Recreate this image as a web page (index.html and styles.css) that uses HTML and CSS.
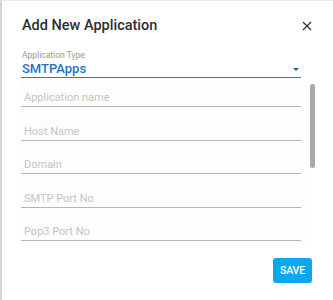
FILE: index.html
```html
<!DOCTYPE html>
<html lang="en">
<head>
    <meta charset="UTF-8">
    <meta name="viewport" content="width=device-width, initial-scale=1.0">
    <title>Add New Application</title>
    <link rel="stylesheet" href="styles.css">
</head>
<body>
    <div class="dialog">
        <div class="dialog-header">
            <h2 class="dialog-title">Add New Application</h2>
            <button type="button" class="close-btn" aria-label="Close">
                <svg width="10" height="10" viewBox="0 0 10 10">
                    <path d="M1 1 L9 9 M9 1 L1 9" stroke="#333" stroke-width="1.3" fill="none"/>
                </svg>
            </button>
        </div>

        <div class="select-field">
            <label class="select-label">Application Type</label>
            <div class="select-value">
                <span>SMTPApps</span>
                <span class="select-arrow"></span>
            </div>
        </div>

        <div class="scroll-area">
            <div class="field-list">
                <input type="text" class="form-input" placeholder="Application name">
                <input type="text" class="form-input" placeholder="Host Name">
                <input type="text" class="form-input" placeholder="Domain">
                <input type="text" class="form-input" placeholder="SMTP Port No">
                <input type="text" class="form-input" placeholder="Pop3 Port No">
                <input type="text" class="form-input" placeholder="User Name">
                <input type="password" class="form-input" placeholder="Password">
                <input type="text" class="form-input" placeholder="From Email">
                <input type="text" class="form-input" placeholder="Description">
            </div>
            <div class="scroll-track">
                <div class="scroll-thumb"></div>
            </div>
        </div>

        <div class="dialog-actions">
            <button type="button" class="save-btn">SAVE</button>
        </div>
    </div>
</body>
</html>
```

FILE: styles.css
```css
* {
    margin: 0;
    padding: 0;
    box-sizing: border-box;
}
body {
    font-family: Roboto, 'Liberation Sans', sans-serif;
    background: #fff;
}
.dialog {
    height: 300px;
    border-left: 2px solid #d6d6d6;
    border-top: 1px solid #ececec;
    display: flex;
    flex-direction: column;
}
.dialog-header {
    display: flex;
    align-items: center;
    justify-content: space-between;
    padding: 15px 19px 0 20px;
    height: 35px;
}
.dialog-title {
    font-size: 14.5px;
    font-weight: 500;
    line-height: 20px;
    color: #2e2e2e;
}
.close-btn {
    background: none;
    border: none;
    width: 14px;
    height: 14px;
    display: flex;
    align-items: center;
    justify-content: center;
    cursor: pointer;
}
.select-field {
    margin: 14px 32px 0 19px;
    border-bottom: 1.5px solid #1e7fd2;
}
.select-label {
    display: block;
    font-size: 8.5px;
    line-height: 11px;
    color: #9a9a9a;
    padding-left: 1px;
}
.select-value {
    display: flex;
    align-items: center;
    justify-content: space-between;
    font-size: 13px;
    font-weight: 500;
    line-height: 16px;
    color: #1c74c6;
    padding: 0 1px;
}
.select-arrow {
    width: 0;
    height: 0;
    border-left: 3px solid transparent;
    border-right: 3px solid transparent;
    border-top: 3px solid #1c62a8;
    margin-right: 1px;
}
.scroll-area {
    display: flex;
    margin: 3px 0 0 18px;
    height: 165px;
}
.field-list {
    width: 286px;
    overflow: hidden;
    display: flex;
    flex-direction: column;
    gap: 17.5px;
    padding: 10px 5px 0 1px;
    background: #fdfdfd;
}
.form-input {
    flex-shrink: 0;
    width: 100%;
    height: 16px;
    border: none;
    border-bottom: 1px solid #b5b5b5;
    background: transparent;
    font-family: inherit;
    font-size: 11px;
    padding: 0 3px 2px;
    outline: none;
    color: #333;
}
.form-input::placeholder {
    color: #c4c4c4;
}
.scroll-track {
    width: 5px;
    margin-left: 4px;
    padding-top: 3px;
}
.scroll-thumb {
    height: 84px;
    background: #a9a9a9;
    border-radius: 3px;
}
.dialog-actions {
    display: flex;
    justify-content: flex-end;
    padding: 12px 21px 0 0;
}
.save-btn {
    width: 39px;
    height: 25px;
    background: #0aa8f0;
    color: #fff;
    border: none;
    border-radius: 3px;
    font-family: inherit;
    font-size: 10.5px;
    font-weight: 500;
    letter-spacing: -0.2px;
    cursor: pointer;
}
```
